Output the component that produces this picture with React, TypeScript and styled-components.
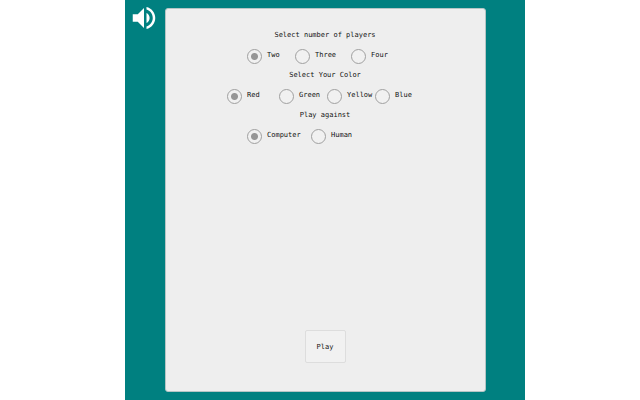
import React from "react";
import styled, { createGlobalStyle } from "styled-components";

const GlobalStyle = createGlobalStyle`
  * { box-sizing: border-box; }
  body { margin: 0; background: #fff; }
`;

const Page = styled.div`
  display: flex;
  justify-content: center;
  min-height: 100vh;
  padding-left: 10px;
  font: 7px/10px "DejaVu Sans Mono", monospace;
  color: #111;
`;

const Board = styled.main`
  display: grid;
  grid-template-columns: 40px minmax(0, 1fr) 39px;
  width: 100%;
  max-width: 400px;
  padding: 8px 0;
  background: #008080;
`;

const SoundButton = styled.button`
  display: flex;
  align-self: start;
  justify-self: start;
  margin: -5px 0 0 4px;
  padding: 0;
  border: 0;
  background: none;
  color: #fff;
  cursor: pointer;
`;

const Panel = styled.form`
  display: flex;
  flex-direction: column;
  align-items: center;
  padding: 21px 9px 28px 8px;
  border: 1px solid #b5c5c5;
  border-radius: 3px;
  background: #eee;
`;

const Group = styled.fieldset`
  height: 40px;
  margin: 0;
  padding: 0;
  border: 0;
`;

const Title = styled.legend`
  margin: 0 auto;
  padding: 0;
`;

const Options = styled.div<{ $columns: string }>`
  display: grid;
  grid-template-columns: ${(p) => p.$columns};
  padding-top: 9px;
  line-height: 13px;
`;

const Choice = styled.label`
  display: flex;
  align-items: flex-start;
  gap: 5px;
  white-space: nowrap;
  cursor: pointer;
`;

const Radio = styled.input`
  appearance: none;
  flex: none;
  width: 15px;
  height: 15px;
  margin: 0;
  border: 1px solid #a0a0a0;
  border-radius: 50%;
  background: #f1f1f1;

  &:checked {
    background: radial-gradient(circle, #969696 3px, #f1f1f1 4px);
  }
`;

const PlayButton = styled.button`
  width: 41px;
  height: 33px;
  margin-top: auto;
  padding: 0;
  border: 1px solid #ddd;
  border-radius: 2px;
  background: #f1f1f1;
  color: inherit;
  font: inherit;
  cursor: pointer;
`;

const groups = [
  { name: "players", title: "Select number of players", columns: "48px 56px 52px", options: ["Two", "Three", "Four"] },
  { name: "color", title: "Select Your Color", columns: "52px 48px 48px 48px", options: ["Red", "Green", "Yellow", "Blue"] },
  { name: "opponent", title: "Play against", columns: "64px 92px", options: ["Computer", "Human"] },
];

export default function App() {
  return (
    <>
      <GlobalStyle />
      <Page>
        <Board>
          <SoundButton type="button" aria-label="Sound">
            <svg width="30" height="30" viewBox="0 0 24 24" fill="currentColor" aria-hidden="true">
              <path d="M3 9v6h4l5 5V4L7 9H3zm13.5 3c0-1.77-1.02-3.29-2.5-4.03v8.05c1.48-.73 2.5-2.25 2.5-4.02zM14 3.23v2.06c2.89.86 5 3.54 5 6.71s-2.11 5.85-5 6.71v2.06c4.01-.91 7-4.49 7-8.77s-2.99-7.86-7-8.77z" />
            </svg>
          </SoundButton>
          <Panel onSubmit={(e) => e.preventDefault()}>
            {groups.map((group) => (
              <Group key={group.name}>
                <Title>{group.title}</Title>
                <Options $columns={group.columns}>
                  {group.options.map((option, i) => (
                    <Choice key={option}>
                      <Radio type="radio" name={group.name} value={option} defaultChecked={i === 0} />
                      {option}
                    </Choice>
                  ))}
                </Options>
              </Group>
            ))}
            <PlayButton type="submit">Play</PlayButton>
          </Panel>
        </Board>
      </Page>
    </>
  );
}
